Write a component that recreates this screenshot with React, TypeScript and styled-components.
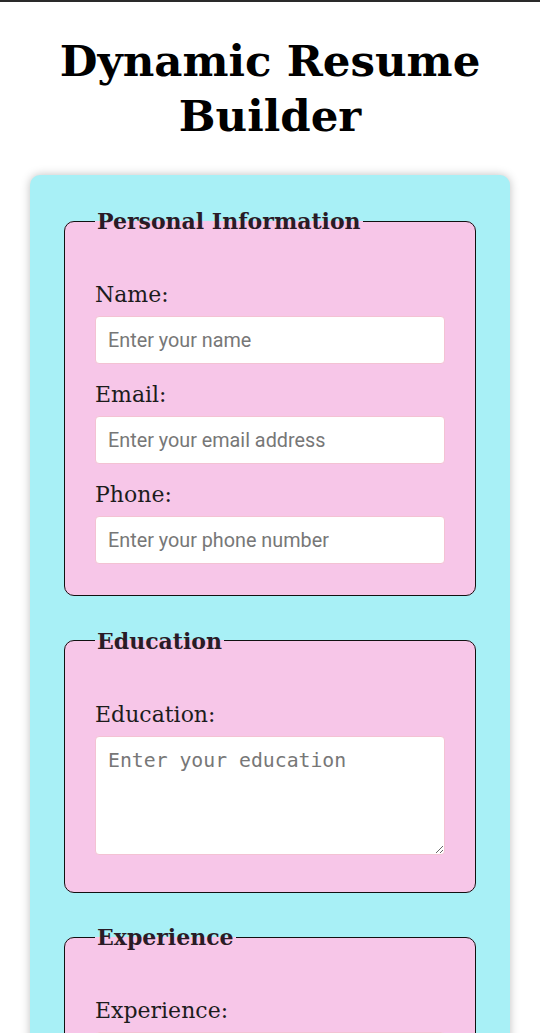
import React from "react";
import styled, { createGlobalStyle } from "styled-components";

const GlobalStyle = createGlobalStyle`
  html, body {
    margin: 0;
    padding: 0;
    background: #ffffff;
  }
  body {
    font-family: "DejaVu Serif", "Liberation Serif", serif;
    color: #1c1c1c;
  }
  * { box-sizing: border-box; }
`;

const TopBar = styled.div`
  height: 2px;
  background: #2a2a2a;
`;

const Title = styled.h1`
  margin: 31px 0 32px;
  text-align: center;
  font-family: "DejaVu Serif", serif;
  font-weight: 700;
  font-size: 43.5px;
  line-height: 55px;
  color: #000;
`;

const Card = styled.main`
  margin: 0 30px;
  padding: 33px 32px 40px;
  background: #a8f0f6;
  border-radius: 10px;
  box-shadow: 0 0 10px rgba(0, 0, 0, 0.25);
  display: flex;
  flex-direction: column;
  gap: 31.5px;
`;

const Section = styled.fieldset`
  margin: 0 2px;
  padding: 46px 30px 31px;
  background: #f7c6e8;
  border: 1.5px solid #111;
  border-radius: 10px;
  min-width: 0;
`;

const Legend = styled.legend`
  padding: 0 2px;
  font-family: "DejaVu Serif", serif;
  font-weight: 700;
  font-size: 22px;
  color: #2a1b26;
`;

const Field = styled.div<{ $tall?: boolean }>`
  display: flex;
  flex-direction: column;
  padding-bottom: ${(p) => (p.$tall ? "6px" : "0")};
  & + & {
    margin-top: 16px;
  }
`;

const Label = styled.label`
  font-size: 22px;
  line-height: 30px;
  margin-bottom: 6px;
  color: #1c1c1c;
`;

const TextInput = styled.input`
  height: 48px;
  padding: 0 12px;
  border: 1px solid #f3c2d3;
  border-radius: 4px;
  background: #fff;
  font-family: Roboto, "Noto Sans", sans-serif;
  font-size: 19.8px;
  color: #222;
  outline: none;
  &::placeholder {
    color: #777;
  }
`;

const TextArea = styled.textarea`
  height: 119px;
  padding: 10px 12px;
  border: 1px solid #f3c2d3;
  border-radius: 4px;
  background: #fff;
  font-family: "DejaVu Sans Mono", monospace;
  font-size: 19.8px;
  line-height: 28px;
  color: #222;
  outline: none;
  &::placeholder {
    color: #777;
  }
`;

export default function App() {
  return (
    <>
      <GlobalStyle />
      <TopBar />
      <Title>
        Dynamic Resume
        <br />
        Builder
      </Title>
      <Card>
        <Section>
          <Legend>Personal Information</Legend>
          <Field>
            <Label htmlFor="name">Name:</Label>
            <TextInput id="name" type="text" placeholder="Enter your name" />
          </Field>
          <Field>
            <Label htmlFor="email">Email:</Label>
            <TextInput id="email" type="email" placeholder="Enter your email address" />
          </Field>
          <Field>
            <Label htmlFor="phone">Phone:</Label>
            <TextInput id="phone" type="tel" placeholder="Enter your phone number" />
          </Field>
        </Section>
        <Section>
          <Legend>Education</Legend>
          <Field $tall>
            <Label htmlFor="education">Education:</Label>
            <TextArea id="education" placeholder="Enter your education" />
          </Field>
        </Section>
        <Section>
          <Legend>Experience</Legend>
          <Field $tall>
            <Label htmlFor="experience">Experience:</Label>
            <TextArea id="experience" placeholder="Enter your experience" />
          </Field>
        </Section>
      </Card>
    </>
  );
}
